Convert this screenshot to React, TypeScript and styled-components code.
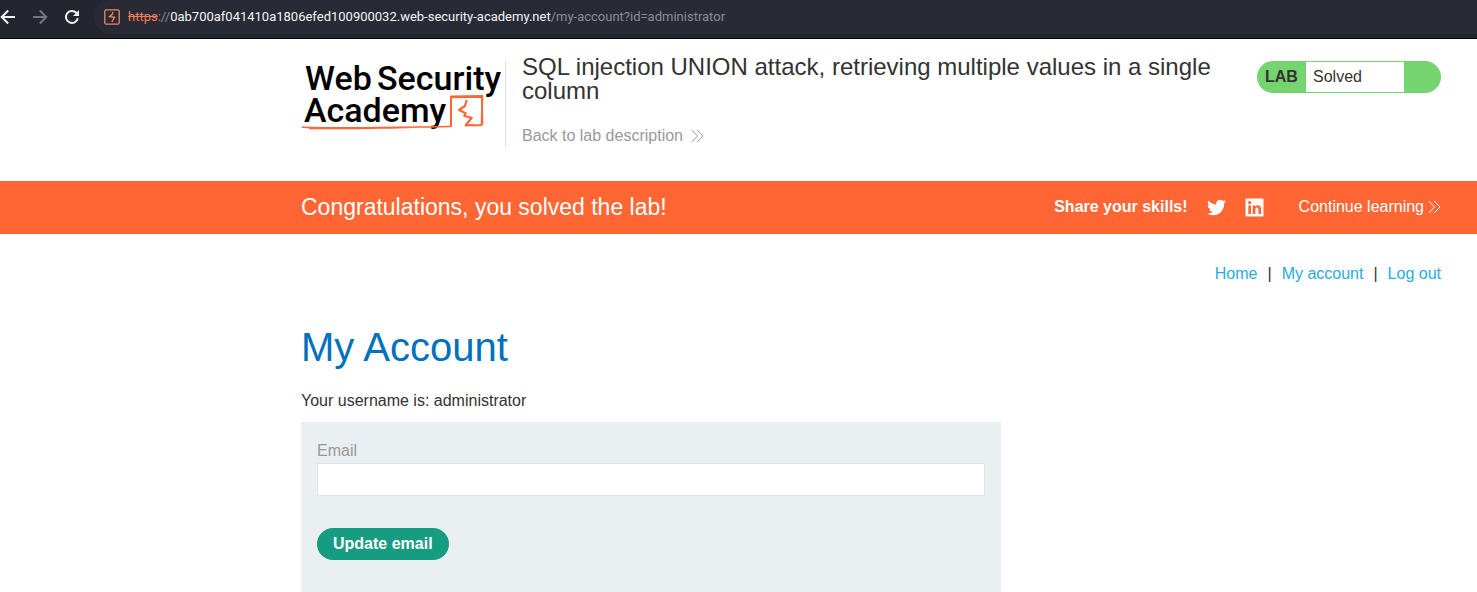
import React from "react";
import styled, { createGlobalStyle } from "styled-components";

const GlobalStyle = createGlobalStyle`
  *, *::before, *::after { box-sizing: border-box; }
  body {
    margin: 0;
    background: #fff;
    color: #333332;
    font: 16px/24px "Liberation Sans", Arial, sans-serif;
  }
  h1, h2, p { margin: 0; font-weight: 400; }
  a { color: inherit; text-decoration: none; }
`;

const Toolbar = styled.div`
  display: flex;
  align-items: center;
  height: 39px;
  padding-bottom: 4px;
  background: #23252f;
  border-bottom: 1px solid #000;
`;

const ToolButton = styled.button<{ $dim?: boolean }>`
  display: flex;
  align-items: center;
  justify-content: center;
  width: 32px;
  height: 32px;
  margin: 0;
  padding: 0;
  border: 0;
  background: none;
  color: ${(p) => (p.$dim ? "#74767c" : "#f1f1f2")};

  &:first-child {
    margin-left: -8px;
  }
`;

const AddressBar = styled.div`
  display: flex;
  flex: 1;
  align-items: center;
  gap: 8px;
  height: 34px;
  margin-left: 6px;
  padding-left: 10px;
  border-radius: 17px 0 0 17px;
  background: #282a36;
`;

const Address = styled.span`
  color: #8b8d94;
  font: 13px/20px Roboto, "Noto Sans", sans-serif;
  white-space: nowrap;

  s { color: #ed7f55; }
  b { color: #f4f4f5; font-weight: 400; }
`;

const Container = styled.div`
  display: flex;
  max-width: 1176px;
  margin-left: auto;
  padding-right: 36px;
`;

const HeaderRow = styled(Container)`
  align-items: flex-start;
  min-height: 142px;
  padding-top: 16px;
`;

const LogoLink = styled.a`
  flex: none;
  height: 86px;
  margin-top: 6px;
  border-right: 1px solid #e0e0e0;

  svg { overflow: visible; }
`;

const TitleBlock = styled.div`
  flex: 1;
  padding: 0 32px 0 16px;
`;

const LabTitle = styled.h2`
  font-size: 24px;
  line-height: 24px;
`;

const BackLink = styled.a`
  display: inline-flex;
  align-items: center;
  gap: 8px;
  margin-top: 21px;
  color: #999;
`;

const LabStatus = styled.div`
  display: flex;
  flex: none;
  width: 184px;
  height: 32px;
  margin-top: 6px;
  padding: 1px 37px 1px 0;
  border-radius: 16px;
  background: #75d46f;
  line-height: 30px;
`;

const LabTag = styled.strong`
  width: 49px;
  padding-left: 8px;
`;

const LabState = styled.span`
  flex: 1;
  padding-left: 7px;
  background: #fff;
`;

const Banner = styled.section`
  background: #ff6633;
  color: #fff;
`;

const BannerRow = styled(Container)`
  align-items: center;
  justify-content: space-between;
  min-height: 53px;
  padding-bottom: 2px;
`;

const BannerTitle = styled.p`
  font-size: 23px;
`;

const Share = styled.div`
  display: flex;
  align-items: center;
  gap: 19px;
`;

const IconLink = styled.a`
  display: flex;
  padding-top: 2px;
`;

const ContinueLink = styled.a`
  display: flex;
  align-items: center;
  gap: 4px;
  margin-left: 16px;
`;

const Main = styled(Container)`
  flex-direction: column;
`;

const AccountNav = styled.nav`
  display: flex;
  justify-content: flex-end;
  gap: 10px;
  padding-top: 28px;

  a { color: #29abe2; }
`;

const PageTitle = styled.h1`
  margin-top: 37px;
  color: #0071bc;
  font-size: 40px;
  line-height: 48px;
`;

const Username = styled.p`
  margin-top: 18px;
`;

const EmailForm = styled.form`
  display: flex;
  flex-direction: column;
  align-items: flex-start;
  width: 100%;
  max-width: 700px;
  margin-top: 9px;
  padding: 17px 16px 32px;
  background: #eaeff2;
`;

const EmailLabel = styled.label`
  color: #999;
`;

const EmailInput = styled.input`
  width: 100%;
  height: 33px;
  padding: 0 8px;
  border: 1px solid #e1e4e6;
  background: #fff;
  font: inherit;
`;

const SubmitButton = styled.button`
  height: 32px;
  margin-top: 32px;
  padding: 0 16px;
  border: 0;
  border-radius: 16px;
  background: #169c80;
  color: #fff;
  font: inherit;
  font-weight: 700;
`;

const Chevrons = () => (
  <svg width="13" height="14" viewBox="0 0 13 14" fill="none" stroke="currentColor" aria-hidden="true">
    <path d="M.7 1 6.5 7l-5.8 6M6.2 1l5.8 6-5.8 6" />
  </svg>
);

const Logo = () => (
  <svg width="204" height="72" viewBox="0 0 204 72" aria-label="Web Security Academy" role="img">
    <g fill="#000" fontFamily="Roboto, sans-serif" fontSize="34" fontWeight="500">
      <text x="4" y="29">Web</text>
      <text x="76" y="29">Security</text>
      <text x="3" y="61">Academy</text>
    </g>
    <g fill="none" stroke="#ff6633" strokeLinejoin="round">
      <path strokeWidth="2" d="M150 65.500V35.500l31.300-.5-.6 29-9 .6" />
      <path strokeWidth="1.500" d="M.7 66.300c50 1.500 90 .2 149.500-.8M8 67.500c50 .5 60-.3 100-1M151 36.600l30-.6M181 35l.6 28" />
      <path strokeWidth="2.200" d="M165.700 39 164 45l-6 4 6.700 3.300-1.400 2.700 7.400 1.700-6 7.600 8-.3" />
    </g>
  </svg>
);

export default function App() {
  return (
    <>
      <GlobalStyle />
      <Toolbar>
        <ToolButton type="button" aria-label="Back">
          <svg width="16" height="16" viewBox="0 0 16 16" fill="none" stroke="currentColor" strokeWidth="2">
            <path d="M15 8H2M8.200 1.500 1.700 8l6.500 6.500" />
          </svg>
        </ToolButton>
        <ToolButton type="button" aria-label="Forward" $dim>
          <svg width="16" height="16" viewBox="0 0 16 16" fill="none" stroke="currentColor" strokeWidth="2">
            <path d="M1 8h13M7.800 1.500 14.300 8l-6.500 6.500" />
          </svg>
        </ToolButton>
        <ToolButton type="button" aria-label="Reload">
          <svg width="16" height="16" viewBox="0 0 16 16" fill="none" stroke="currentColor" strokeWidth="2">
            <path d="M13.800 9.200A6 6 0 1 1 12.300 3.800L14 5.500" />
            <path d="M15 1v6H9z" fill="currentColor" stroke="none" />
          </svg>
        </ToolButton>
        <AddressBar>
          <svg width="16" height="16" viewBox="0 0 16 16" fill="none" stroke="#f0875c" strokeWidth="1.300" aria-hidden="true">
            <rect x=".8" y=".8" width="14.400" height="14.400" rx="1.500" />
            <path d="M9 3 8.300 5.300 5.500 7.700l3.200.5M7.800 8l2.800.3L7.800 13" />
          </svg>
          <Address>
            <s>https</s>://<b>0ab700af041410a1806efed100900032.web-security-academy.net</b>/my-account?id=administrator
          </Address>
        </AddressBar>
      </Toolbar>

      <header>
        <HeaderRow>
          <LogoLink href="#">
            <Logo />
          </LogoLink>
          <TitleBlock>
            <LabTitle>SQL injection UNION attack, retrieving multiple values in a single column</LabTitle>
            <BackLink href="#">
              Back to lab description
              <Chevrons />
            </BackLink>
          </TitleBlock>
          <LabStatus>
            <LabTag>LAB</LabTag>
            <LabState>Solved</LabState>
          </LabStatus>
        </HeaderRow>
      </header>

      <Banner>
        <BannerRow>
          <BannerTitle>Congratulations, you solved the lab!</BannerTitle>
          <Share>
            <strong>Share your skills!</strong>
            <IconLink href="#" aria-label="Twitter">
              <svg width="19" height="19" viewBox="0 0 24 24" fill="currentColor">
                <path d="M23.950 4.570a10 10 0 0 1-2.820.77 4.960 4.960 0 0 0 2.160-2.720c-.95.55-2 .95-3.130 1.180a4.920 4.920 0 0 0-8.380 4.480C7.690 8.090 4.070 6.130 1.640 3.160a4.820 4.820 0 0 0-.67 2.480c0 1.710.87 3.210 2.190 4.100a4.900 4.900 0 0 1-2.230-.62v.06a4.920 4.920 0 0 0 3.950 4.830 5 5 0 0 1-2.210.08 4.940 4.940 0 0 0 4.600 3.420A9.870 9.870 0 0 1 0 19.540a14 14 0 0 0 7.550 2.210c9.050 0 14-7.500 14-13.980 0-.21 0-.42-.02-.63a9.900 9.900 0 0 0 2.420-2.570z" />
              </svg>
            </IconLink>
            <IconLink href="#" aria-label="LinkedIn">
              <svg width="19" height="19" viewBox="0 0 19 19">
                <rect x=".5" y=".5" width="18" height="18" rx="1" fill="#fff" />
                <g fill="#ff6633">
                  <circle cx="4.700" cy="4.700" r="1.600" />
                  <path d="M3.300 7.500H6V16H3.300zM7.700 7.500h2.600v1.200c.5-.9 1.400-1.400 2.600-1.400 2.600 0 3.200 1.700 3.200 4V16h-2.700v-4.200c0-1.100-.1-2.200-1.400-2.200-1.300 0-1.600 1-1.600 2.100V16H7.700z" />
                </g>
              </svg>
            </IconLink>
            <ContinueLink href="#">
              Continue learning
              <Chevrons />
            </ContinueLink>
          </Share>
        </BannerRow>
      </Banner>

      <Main as="main">
        <AccountNav>
          <a href="#">Home</a>
          <span>|</span>
          <a href="#">My account</a>
          <span>|</span>
          <a href="#">Log out</a>
        </AccountNav>
        <PageTitle>My Account</PageTitle>
        <Username>Your username is: administrator</Username>
        <EmailForm>
          <EmailLabel htmlFor="email">Email</EmailLabel>
          <EmailInput id="email" type="email" name="email" />
          <SubmitButton type="submit">Update email</SubmitButton>
        </EmailForm>
      </Main>
    </>
  );
}
